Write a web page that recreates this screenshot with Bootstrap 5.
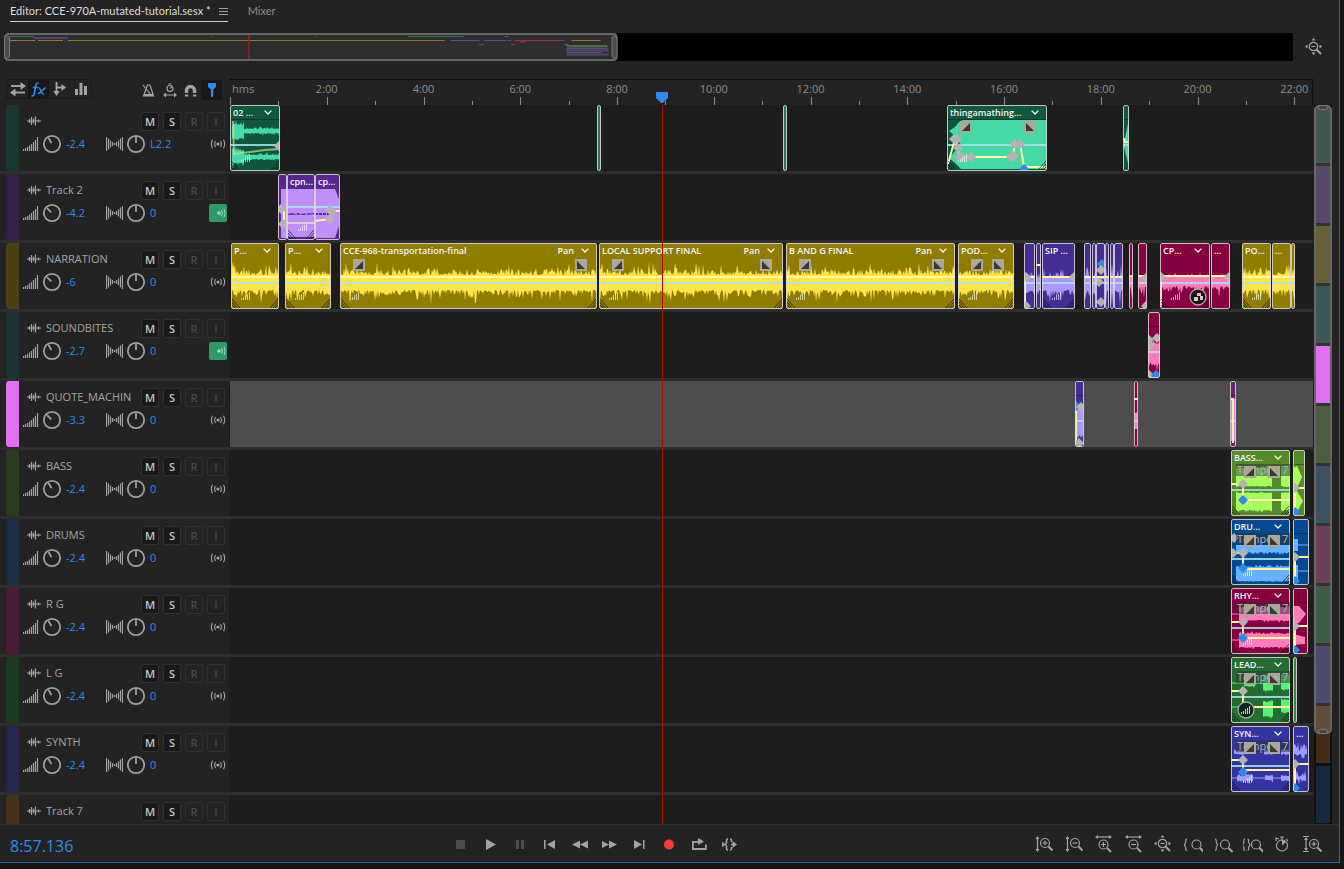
<!DOCTYPE html>
<html lang="en" data-bs-theme="dark">
<head>
<meta charset="utf-8">
<meta name="viewport" content="width=device-width, initial-scale=1">
<title>Multitrack editor</title>
<link href="https://cdn.jsdelivr.net/npm/bootstrap@5.3.0/dist/css/bootstrap.min.css" rel="stylesheet">
<style>
  body { background: #161616; color: #a3a3a3; font: 11px/16px "Open Sans", "Noto Sans", sans-serif; }
  svg { display: block; }
  button { background: none; border: 0; padding: 0; color: inherit; }
  .editor { height: calc(100vh - 6px); margin-right: 4px; background: #232323; border: solid #2463a5; border-width: 0 1px 1px 0; }
  .tabs { height: 33px; flex: none; padding-left: 10px; gap: 20px; font-family: Lato, "Open Sans", sans-serif; }
  .tabs a { color: #8c8c8c; text-decoration: none; height: 22px; padding-top: 3px; }
  .tabs a.current { color: #dedede; border-bottom: 1px solid #cfcfcf; gap: 8px; }
  .overview { height: 28px; flex: none; margin: 0 12px 17px 4px; gap: 12px; }
  .overview-track { background: #000; height: 28px; }
  .tools { height: 27px; }
  .left-col { width: 230px; }
  .tool-group { margin: 1px 0 0 6px; border: 1px solid #1a1a1a; border-radius: 2px; height: 20px; }
  .tool { width: 21px; height: 20px; display: flex; align-items: center; justify-content: center; }
  .tool.on { background: #181818; color: #2d8ceb; }
  .ruler { margin-top: 1px; border: solid #0c0c0c; border-width: 1px 1px 0 0; color: #8c8c8c; }
  .ruler span { position: absolute; top: 1px; transform: translateX(-50%); }
  .ruler span.unit { transform: none; left: 2px; }
  .ruler i { position: absolute; bottom: 0; width: 1px; height: 4px; background: #8c8c8c; }
  .ruler i.major { height: 8px; }
  .right-col { width: 26px; }
  .tracks { min-height: 0; flex: 1 1 0; border-bottom: 1px solid #303030; }
  .track-list { overflow: hidden; }
  .track { height: 69px; border-bottom: 3px solid #2e2e2e; padding-left: 6px; }
  .strip { width: 13px; border-radius: 3px 0 0 3px; }
  .head { width: 211px; padding: 7px 2px 0 4px; border-right: 1px solid #1c1c1c; }
  .lane { background: #1d1d1d; }
  .track.chosen .lane { background: #4d4d4d; }
  .name-line { height: 18px; padding-left: 4px; }
  .name-line .title { width: 100px; padding-left: 5px; white-space: nowrap; }
  .sq { width: 18px; height: 19px; margin-right: 4px; border: 1px solid #303030; border-radius: 2px; background: #191919; color: #c4c4c4; font: 600 11px/17px "Open Sans", sans-serif; }
  .sq.off { background: #232323; color: #484848; }
  .knob-line { height: 20px; margin-top: 4px; }
  .val { color: #2d8ceb; }
  .knob-box { width: 23px; padding-left: 3px; }
  .gain { width: 44px; padding-left: 4px; }
  .pan { width: 60px; padding-left: 4px; }
  .mono { width: 18px; height: 18px; border-radius: 2px; }
  .mono.on { background: #2f9a68; color: #a5d8bd; }
  .clip { position: absolute; top: 0; height: 66px; overflow: hidden; border-radius: 2px; background: var(--deep); }
  .clip::after { content: ""; position: absolute; inset: 0; border: 1px solid #ded8d8; border-radius: 2px; opacity: .85; }
  .clip > svg { position: absolute; inset: 0; width: 100%; height: 100%; }
  .clip-head { position: relative; z-index: 1; height: 15px; padding: 0 8px 0 3px; color: #f6f6f6; font-size: 9px; line-height: 15px; font-weight: 600; white-space: nowrap; }
  .clip-head svg { margin-left: 7px; }
  .tempo { position: absolute; z-index: 1; left: 5px; top: 14px; right: 0; height: 12px; background: #2a323880; color: #b4b7ba; font-size: 11px; line-height: 12px; padding-left: 1px; white-space: nowrap; }
  .playhead { position: absolute; top: 0; bottom: -3px; width: 1px; background: #b40808; z-index: 3; }
  .marker { position: absolute; bottom: 2px; z-index: 3; transform: translateX(-50%); color: #2d8ceb; }
  .vscroll { width: 18px; margin-left: 1px; background: #101010; }
  .vscroll .cells { height: 100%; gap: 3px; padding: 1px 2px; }
  .thumb { position: absolute; inset: 0 0 auto 0; height: 87.5%; border: 2px solid #666; border-radius: 5px; background: #ffffff26; }
  .grip { position: absolute; left: 2px; width: 10px; height: 5px; border: 1px solid #777; border-radius: 3px; background: #444; }
  .footer-bar { height: 37px; flex: none; }
  .clock { color: #2d8ceb; font-size: 16px; line-height: 24px; padding: 5px 0 0 10px; }
  .fb { width: 30px; height: 37px; display: flex; align-items: center; justify-content: center; }
  .fb.dim { color: #4c4c4c; }
  .zooms { margin-right: 11px; }
</style>
</head>
<body>
<svg width="0" height="0" class="position-absolute" aria-hidden="true">
  <symbol id="wave" viewBox="0 0 14 10"><path d="M0 5h14M2.500 3v4M4.500 1v8M6.500 2.500v5M8.500 .5v9M11.500 3.500v3" stroke="currentColor" stroke-width="1.200" fill="none"/></symbol>
  <symbol id="bars" viewBox="0 0 16 14"><path d="M.5 14v-2M2.500 14v-3M4.500 14v-4M6.500 14v-5.500M8.500 14V7M10.500 14V5M12.500 14V3M14.500 14V0" stroke="currentColor" stroke-width="1.200"/></symbol>
  <symbol id="panico" viewBox="0 0 17 14"><path d="M.5 0v14M2.500 1.500v11M4.500 3.500v7M6.500 5v4M10.500 5v4M12.500 3.500v7M14.500 1.500v11M16.500 0v14M8.500 6v2" stroke="currentColor" stroke-width="1.200"/></symbol>
  <symbol id="mono" viewBox="0 0 16 10"><circle cx="8" cy="5" r="1.600" fill="currentColor"/><path d="M5.500 2Q3.800 5 5.500 8M10.500 2q1.700 3 0 6M2.500 .8Q.2 5 2.500 9.200M13.500 .8q2.300 4.200 0 8.400" fill="none" stroke="currentColor" stroke-width="1.100"/></symbol>
  <symbol id="monoR" viewBox="0 0 16 10"><circle cx="9" cy="5" r="1.800" fill="currentColor"/><path d="M11.500 2q1.700 3 0 6M14 .8q2.300 4.200 0 8.400" fill="none" stroke="currentColor"/></symbol>
  <symbol id="chev" viewBox="0 0 8 5"><path d="M.6.6 4 4 7.400.6" fill="none" stroke="currentColor" stroke-width="1.300"/></symbol>
  <symbol id="fit" viewBox="0 0 18 18"><circle cx="8.500" cy="8.500" r="4.200" fill="none" stroke="currentColor" stroke-width="1.200"/><path d="M6.500 8.500h4" stroke="currentColor"/><path d="m11.500 11.500 4.500 4.500" stroke="currentColor" stroke-width="2"/><path d="M8.500 0l2 2.500h-4zM8.500 17l2-2.500h-4zM0 8.500l2.500-2v4zM17 8.500l-2.500-2v4z" fill="currentColor" stroke="none"/></symbol>
</svg>

<main class="editor d-flex flex-column">
  <nav class="tabs d-flex align-items-start" aria-label="Panels">
    <a href="#editor" class="current d-flex">Editor: CCE-970A-mutated-tutorial.sesx *
      <svg width="9" height="9" class="mt-1" stroke="#9c9c9c"><path d="M0 1.500h9M0 4.500h9M0 7.500h9"/></svg></a>
    <a href="#mixer">Mixer</a>
  </nav>

  <section class="overview d-flex align-items-center" aria-label="Overview">
    <svg class="overview-track flex-fill" viewBox="0 0 1290 28" preserveAspectRatio="none" id="mini"></svg>
    <button type="button" aria-label="Zoom out full" class="pe-1"><svg width="18" height="18"><use href="#fit"/></svg></button>
  </section>

  <div class="tools d-flex flex-shrink-0">
    <div class="left-col d-flex justify-content-between flex-shrink-0">
      <div class="tool-group d-flex align-items-center">
        <button type="button" class="tool" aria-label="Inputs and outputs"><svg width="16" height="14" fill="none" stroke="currentColor" stroke-width="1.800"><path d="M1 4h12M3 10.500h12"/><path d="M10.500 0 16 4l-5.500 4zM5.500 6.500 0 10.500l5.500 4z" fill="currentColor" stroke="none"/></svg></button>
        <button type="button" class="tool on" aria-label="Effects"><svg width="15" height="15" fill="none" stroke="currentColor" stroke-width="1.600"><path d="M7.500 1.500C5 .5 4.800 3 4.300 6L3.200 12c-.3 1.700-1.200 2.200-2.700 1.700M1.800 5.500h5M7.500 5.500c2 0 2.500 7 5.500 6.500M14.500 5.500 7 12"/></svg></button>
        <button type="button" class="tool" aria-label="Sends"><svg width="13" height="14" fill="none" stroke="currentColor" stroke-width="1.800"><path d="M3.500 0v10M3.500 5.500H9"/><path d="m8.500 2 4.500 3.500L8.500 9zM.3 9h6.400L3.500 14z" fill="currentColor" stroke="none"/></svg></button>
        <button type="button" class="tool" aria-label="EQ"><svg width="12" height="12" fill="currentColor"><path d="M0 6h3v6H0zM4.500 0h3v12h-3zM9 3h3v9H9z"/></svg></button>
      </div>
      <div class="d-flex" style="padding:2px 8px 0 0">
        <button type="button" class="tool" aria-label="Metronome"><svg width="13" height="13" fill="none" stroke="currentColor" stroke-width="1.200"><path d="M5.500 1h2.500l3.500 11h-10zM1 1l8 10"/><path d="M2 10h9v2H2z" fill="currentColor" stroke="none"/></svg></button>
        <button type="button" class="tool" aria-label="Time stretch"><svg width="14" height="15" fill="none" stroke="currentColor" stroke-width="1.100"><circle cx="7" cy="5.500" r="3"/><path d="M7 5.500 9 3.500M5.500 1h3M2 12h10"/><path d="M3 9.500 0 12l3 2.500zM11 9.500l3 2.500-3 2.500z" fill="currentColor" stroke="none"/></svg></button>
        <button type="button" class="tool" aria-label="Snapping"><svg width="13" height="13" fill="none" stroke="currentColor"><path d="M2.500 9V6.500a4 4 0 0 1 8 0V9" stroke-width="3.400"/><path d="M1 11.500h3.200M9 11.500h3.200" stroke-width="2"/></svg></button>
        <button type="button" class="tool on" aria-label="Pin playhead"><svg width="8" height="14" fill="currentColor"><path d="M0 0h8v4L5 6.500V14H3V6.500L0 4z"/></svg></button>
      </div>
    </div>
    <div class="ruler position-relative flex-fill" id="ruler"><span class="unit">hms</span></div>
    <div class="right-col"></div>
  </div>

  <div class="tracks d-flex">
    <div class="track-list position-relative flex-fill" id="tracks"></div>
    <div class="right-col flex-shrink-0">
      <div class="vscroll position-relative h-100">
        <div class="cells d-flex flex-column" id="cells"></div>
        <div class="thumb"><i class="grip" style="top:-2px"></i><i class="grip" style="bottom:-2px"></i></div>
      </div>
    </div>
  </div>

  <footer class="footer-bar d-flex align-items-center">
    <div class="col-4 clock">8:57.136</div>
    <div class="d-flex" id="transport"></div>
    <div class="d-flex ms-auto zooms" id="zooms"></div>
  </footer>
</main>

<script src="https://cdn.jsdelivr.net/npm/bootstrap@5.3.0/dist/js/bootstrap.bundle.min.js"></script>
<script>
// Visible range of the timeline, in timeline units; two minutes are 96.85 units.
const SPAN = 1083, TWO_MIN = 96.85, HEAD = 432;
const pct = u => (u / SPAN * 100).toFixed(3) + '%';
let seed = 7;
const rnd = () => (seed = (seed * 16807) % 2147483647) / 2147483647;

const tones = {
  green: ['#10573e', '#46d8a6'], purple: ['#57288c', '#bf8ff8'], gold: ['#907c00', '#ffe44a'],
  violet: ['#442e94', '#ab98ff'], rose: ['#870040', '#ff7cbb'], lime: ['#56892a', '#a6ff5c'],
  blue: ['#054a90', '#6ab2ff'], leaf: ['#236d33', '#5df077'], indigo: ['#3434a0', '#9d9cff'], pink: ['#6d1f76', '#e27af4'],
  sliver: ['#2a7a5c', '#2a7a5c'], leafSliver: ['#3c7f4a', '#3c7f4a']
};

// One block of waveform: x0, x1, top, bottom, spike height up, spike height down
function block([x0, x1, t, b, ju, jd]) {
  const up = [], dn = [], ph = rnd() * 6;
  const spike = () => rnd() < .06 ? .9 + rnd() * .4 : .75 * Math.pow(rnd(), 2);
  for (let x = x0; x <= x1; x++) {
    const swell = .75 + .25 * Math.sin(x / 5 + ph) * Math.sin(x / 17 + ph);
    up.push(x + ' ' + (t - ju * swell * spike()).toFixed(1));
    dn.unshift(x + ' ' + (b + jd * swell * spike()).toFixed(1));
  }
  return 'M' + up.join('L') + 'L' + dn.join('L') + 'Z';
}
const fadeIn = (x, y) => `<rect x="${x}" y="${y}" width="12" height="12" fill="#a9a89a"/><path d="M${x + 10} ${y + 2}v8h-8z" fill="#3b3a2c"/>`;
const fadeOut = (x, y) => `<rect x="${x}" y="${y}" width="12" height="12" fill="#a9a89a"/><path d="M${x + 2} ${y + 2}v8h8z" fill="#3b3a2c"/>`;
const sig = (x, y) => `<path d="M${x + .5} ${y}v-2M${x + 2.5} ${y}v-3M${x + 4.5} ${y}v-5M${x + 6.5} ${y}v-6M${x + 8.5} ${y}v-8" stroke="#fff" stroke-opacity=".6"/>`;
const dia = ([x, y, c]) => `<path d="M${x} ${y - 5}l5 5-5 5-5-5z" fill="${c ? '#2d8ceb' : '#b4b2b2'}"/>`;

function clip(c) {
  const [deep, hi] = tones[c.tone], w = c.len;
  let g = `<path d="${(c.wave || []).map(block).join('') + (c.shape || '')}" fill="${hi}"/>`;
  if (c.raw) g += c.raw;
  if (c.line) g += `<path d="M0 ${c.line}h${w}" stroke="#a9e4ec" stroke-opacity=".85" stroke-width="2"/>`;
  if (c.soft) g += `<path d="M0 ${c.soft}h${w}" stroke="#fff79e" stroke-width="2"/>`;
  if (c.auto) g += `<path d="M${c.auto.map(p => p.join(' ')).join('L')}" fill="none" stroke="#fbf5a8" stroke-width="2"/>`;
  if (c.pts) g += c.pts.map(dia).join('');
  if (w > 26) g += `<path d="M1 56l8 9M1 59l5 6M1 62l3 3M${w - 1} 56l-8 9M${w - 1} 59l-5 6M${w - 1} 62l-3 3" stroke="#000" stroke-opacity=".6"/>`;
  if (c.divide) g += `<path d="M0 14.500h${w}" stroke="#000" stroke-opacity=".35"/>`;
  if (c.tin != null) c.icons = (c.icons || '') + fadeIn(c.tin, 16);
  if (c.tout != null) c.icons = (c.icons || '') + fadeOut(c.tout, 16);
  if (c.sig != null) g += sig(c.sig, 57);
  const svg = (k, z) => `<svg viewBox="0 0 ${w} 66" preserveAspectRatio="none" ${z ? 'class="z-1"' : ''}>${k}</svg>`;
  const head = c.label ? `<div class="clip-head d-flex align-items-center"><span class="flex-fill">${c.label}</span>${c.pan ? '<span>Pan</span>' : ''}${c.menu ? '<svg width="8" height="5"><use href="#chev"/></svg>' : ''}</div>` : '';
  return `<div class="clip" style="left:${pct(c.at)};width:${pct(w)};--deep:${deep}">${svg(g)}${head}${c.tempo ? '<div class="tempo">Tempo 17</div>' : ''}${c.icons ? svg(c.icons, 1) : ''}</div>`;
}

const gold = (at, len, label, o = {}) => ({ at, len, tone: 'gold', label, wave: [[0, len, 32, 47, 12, 12]], soft: 34, line: 40, sig: len > 25 ? 10 : null, ...o });
const vio = (at, len, o = {}) => ({ at, len, tone: 'violet', wave: [[0, len, 35, 47, 12, 14]], soft: 34, line: 40, ...o });
const ros = (at, len, o = {}) => ({ at, len, tone: 'rose', wave: [[0, len, 34, 43, 5, 14]], soft: 33, line: 40, ...o });
const stem = (tone, label, o) => ({ at: 1001, len: 59, tone, label, menu: 1, tempo: 1, tin: 13, tout: 37, line: 40, auto: [[0, 34], [12, 34], [12, 50], [59, 50]], pts: [[12, 34], [12, 50, 1]], sig: 12, ...o });
const tail = (tone, len, o) => ({ at: 1063, len, tone, divide: 1, auto: [[2, 64], [2, 38], [len, 38]], pts: [[2, 38], [2, 62, 1]], ...o });

const tracks = [
  { name: '', color: '#1b3530', vol: '-2.4', pan: 'L2.2', clips: [
    { at: 0, len: 50, tone: 'green', label: '02 …', menu: 1, divide: 1, wave: [[2, 14, 20, 32, 5, 5], [14, 49, 24, 28, 3, 3], [2, 14, 46, 58, 5, 5], [14, 49, 50, 54, 3, 3]], line: 40, sig: 11, raw: '<path d="M3 16L4 49L35 45L50 44" fill="none" stroke="#c5dc8f" stroke-width="2" opacity=".7"/>', pts: [[49, 41]] },
    { at: 367, len: 4, tone: 'sliver' }, { at: 553, len: 4, tone: 'sliver' },
    { at: 717, len: 100, tone: 'green', label: 'thingamathing…', menu: 1, divide: 1, line: 40, sig: 11, shape: 'M2 26L8 22 12 17 16 15H100V40H14L8 31zM2 53L8 46 14 40H100V64H14L8 58z', auto: [[1, 59], [8, 34], [11, 43], [12, 52], [66, 52], [68, 38], [73, 38], [77, 62], [98, 62]], pts: [[7, 34], [10, 34], [11, 43], [12, 52], [15, 52], [24, 52], [64, 52], [67, 51], [68, 39], [73, 39], [77, 64, 1]], tin: 13, tout: 77 },
    { at: 893, len: 6, tone: 'green', divide: 1, line: 40, shape: 'M6 14V62L1 42V38z', auto: [[1, 33], [2, 37], [6, 37]] }] },
  { name: 'Track 2', color: '#33214a', vol: '-4.2', pan: '0', on: 1, clips: [
    { at: 48, len: 9, tone: 'purple', shape: 'M3 15H9V64H3z', pts: [[3, 35], [5, 50]], auto: [[6, 37], [6, 46]] },
    { at: 57, len: 28, tone: 'purple', label: 'cpn…', wave: [[0, 28, 15, 39, 0, 2], [0, 28, 41, 63, 2, 0]], line: 33, raw: '<path d="M0 49h28" stroke="#ddcbd8" stroke-width="2"/>', sig: 11 },
    { at: 85, len: 25, tone: 'purple', label: 'cp…', shape: 'M0 15H20L24 25V52L20 64H0z', line: 33, raw: '<path d="M0 40h15" stroke="#57288c" stroke-width="2" stroke-dasharray="3 1"/>', auto: [[0, 47], [15, 45], [17, 37], [25, 37]], pts: [[15, 45], [17, 38], [15, 36]] }] },
  { name: 'NARRATION', color: '#4a4014', vol: '-6', pan: '0', clips: [
    gold(1, 48, 'P…', { menu: 1 }), gold(55, 46, 'P…', { menu: 1 }),
    gold(110, 257, 'CCE-968-transportation-final', { menu: 1, pan: 1, tin: 13, tout: 235 }),
    gold(369, 184, 'LOCAL SUPPORT FINAL', { menu: 1, pan: 1, tin: 13, tout: 161 }),
    gold(556, 169, 'B AND G FINAL', { menu: 1, pan: 1, tin: 13, tout: 146 }),
    gold(728, 56, 'POD…', { menu: 1, tin: 13, tout: 34 }),
    vio(794, 11, { pts: [[2, 34], [2, 63]], auto: [[1, 34], [1, 63]] }), vio(806, 5, { soft: 22 }), vio(812, 33, { label: 'SIP …', sig: 10, pts: [[32, 34]] }),
    vio(854, 7), vio(862, 4), vio(866, 9, { wave: [[0, 9, 34, 36, 1, 1]], pts: [[6, 21, 1], [5, 27], [3, 39], [5, 59]] }), vio(875, 4), vio(880, 4), vio(884, 9),
    ros(899, 4), ros(908, 9, { pts: [[8, 35], [8, 63]] }),
    ros(930, 50, { label: 'CP…', menu: 1, sig: 11, auto: [[1, 64], [1, 34]], pts: [[1, 34]], icons: '<circle cx="38" cy="54" r="8" fill="#25101a" stroke="#aaa" stroke-width="1.300"/><path d="M34 54h4v4h-4zM40 53h3v4h-3zM37 50h4v3h-4z" fill="#ccc"/>' }),
    ros(981, 19, { label: '…', pts: [[18, 34]] }),
    gold(1012, 29, 'PO…'), gold(1042, 19, '…'), gold(1061, 4)] },
  { name: 'SOUNDBITES', color: '#1b3333', vol: '-2.7', pan: '0', on: 1, clips: [
    ros(918, 12, { divide: 1, soft: 0, wave: [[0, 12, 32, 51, 5, 12]], pts: [[1, 28], [9, 26], [2, 33], [1, 63], [8, 63, 1]] })] },
  { name: 'QUOTE_MACHIN', color: '#e070f0', vol: '-3.3', pan: '0', chosen: 1, clips: [
    vio(845, 9, { divide: 1, soft: 0, wave: [[0, 9, 29, 54, 3, 8]], auto: [[1, 30], [1, 62]], pts: [[1, 25, 1], [6, 26], [4, 62]] }),
    ros(904, 4, { soft: 18, wave: [[0, 4, 32, 48, 2, 2]] }),
    { at: 1000, len: 6, tone: 'pink', shape: 'M1 18H6V60H1z', line: 40, auto: [[1, 18], [3, 18], [3, 62]], divide: 1 }] },
  { name: 'BASS', color: '#2c3b20', vol: '-2.4', pan: '0', clips: [
    stem('lime', 'BASS…', { wave: [[5, 41, 18, 36, 5, 2], [50, 59, 18, 36, 5, 2], [5, 41, 43, 60, 2, 3], [50, 59, 43, 60, 2, 3]] }),
    tail('lime', 12, { shape: 'M0 18L4 16 9 27 4 38H0zM0 42L4 41 10 51 4 62H0z' })] },
  { name: 'DRUMS', color: '#1c2f42', vol: '-2.4', pan: '0', clips: [
    stem('blue', 'DRU…', { wave: [[5, 59, 26, 33, 0, 5], [5, 59, 48, 62, 3, 1]], pts: [[3, 19], [2, 34], [12, 34], [12, 49, 1]] }),
    tail('blue', 16, { shape: 'M0 20H5V32H0zM0 46H5V60H0z', raw: '<path d="M0 26h16M0 52h16" stroke="#6ab2ff"/>' })] },
  { name: 'R G', color: '#4a1a36', vol: '-2.4', pan: '0', clips: [
    stem('rose', 'RHY…', { wave: [[8, 59, 20, 32, 6, 3], [8, 59, 46, 59, 4, 3]], raw: '<path d="M0 26h9M0 52h9" stroke="#ff7cbb"/>' }),
    tail('rose', 15, { shape: 'M0 18H6L13 26 6 35H0zM0 46L12 49V56L0 57z' })] },
  { name: 'L G', color: '#1c3a22', vol: '-2.4', pan: '0', clips: [
    stem('leaf', 'LEAD…', { sig: null, wave: [[13, 24, 20, 29, 4, 3], [32, 42, 18, 33, 3, 3], [50, 59, 18, 32, 3, 3], [32, 42, 45, 59, 3, 3], [50, 59, 43, 55, 3, 3]], pts: [[12, 34]], raw: '<path d="M0 26h59M0 50h59" stroke="#5df077"/>', icons: '<circle cx="15" cy="53" r="8" fill="#11281b" stroke="#aaa" stroke-width="1.300"/><path d="M10.500 57v-2M12.500 57v-3M14.500 57v-5M16.500 57v-6M18.500 57v-8" stroke="#c8d0cc"/>' }),
    { at: 1063, len: 4, tone: 'leafSliver' }] },
  { name: 'SYNTH', color: '#27264c', vol: '-2.4', pan: '0', clips: [
    stem('indigo', 'SYN…', { pts: [[12, 34], [12, 46, 1]], auto: [[0, 34], [12, 34], [12, 44], [59, 44]], wave: [[3, 20, 25, 28, 3, 1], [33, 42, 24, 28, 2, 2], [50, 58, 24, 28, 2, 2], [6, 22, 50, 54, 5, 5], [34, 42, 50, 54, 3, 3], [50, 58, 50, 54, 3, 3]], raw: '<path d="M0 52h59" stroke="#9d9cff"/>' }),
    tail('indigo', 16, { label: '…', divide: 0, wave: [[1, 14, 25, 28, 14, 5], [1, 13, 51, 53, 9, 9]] })] },
  { name: 'Track 7', color: '#44301b', clips: [], folded: 1 }
];

const knob = (label, ang) => `<button type="button" class="knob-box" aria-label="${label}"><svg width="20" height="20" viewBox="0 0 20 20" fill="none" stroke="#a0a0a0" stroke-width="1.800"><circle cx="10" cy="10" r="8.200"/><path d="M10 9V3" transform="rotate(${ang} 10 10)"/></svg></button>`;
const icon = (id, w, h) => `<svg width="${w}" height="${h}"><use href="#${id}"/></svg>`;

document.getElementById('tracks').innerHTML = tracks.map(t => `
  <section class="track d-flex${t.chosen ? ' chosen' : ''}" aria-label="${t.name || 'Track 1'}">
    <div class="strip flex-shrink-0" style="background:${t.color}"></div>
    <div class="head flex-shrink-0">
      <div class="name-line d-flex align-items-center">${icon('wave', 14, 10)}<span class="title">${t.name}</span>
        <button type="button" class="sq">M</button><button type="button" class="sq">S</button><button type="button" class="sq off">R</button><button type="button" class="sq off me-0">I</button></div>
      ${t.folded ? '' : `<div class="knob-line d-flex align-items-center">${icon('bars', 16, 14)}${knob('Volume', parseFloat(t.vol) < -3 ? -45 : -30)}<span class="val gain">${t.vol}</span>
        ${icon('panico', 17, 14)}${knob('Pan', 0)}<span class="val pan">${t.pan}</span>
        <button type="button" class="mono d-flex align-items-center justify-content-center ms-auto${t.on ? ' on' : ''}" aria-label="Mono">${icon(t.on ? 'monoR' : 'mono', 16, 10)}</button></div>`}
    </div>
    <div class="lane position-relative flex-fill">${t.clips.map(clip).join('')}<i class="playhead" style="left:${pct(HEAD)}"></i></div>
  </section>`).join('');

let r = '';
for (let i = 0; i <= 22; i++) {
  r += `<i class="${i % 2 ? '' : 'major'}" style="left:${pct(i * TWO_MIN / 2)}"></i>`;
  if (i && i % 2 === 0) r += `<span style="left:${pct(i * TWO_MIN / 2)}">${i}:00</span>`;
}
r += `<svg class="marker" style="left:${pct(HEAD)}" width="12" height="11"><path d="M0 1q0-1 1-1h10q1 0 1 1v5L6.800 11H5.200L0 6z" fill="currentColor"/></svg>`;
document.getElementById('ruler').insertAdjacentHTML('beforeend', r);

document.getElementById('cells').innerHTML = ['#1f3a34', '#3c2a50', '#4f4518', '#1f3a3a', '#e070f0', '#2f4020', '#1e3246', '#50203c', '#1f4028', '#2e2d58', '#452e18', '#16293f']
  .map((c, i) => `<i class="flex-fill position-relative${i === 4 ? ' z-1' : ''}" style="background:${c}"></i>`).join('');

// Overview lines: x0, x1, y, colour, thickness
const mini = [[6, 30, 3.5, '#2f7059'], [208, 209, 3.5, '#2f7059'], [312, 313, 3.5, '#2f7059'], [404, 460, 3.5, '#2f7059'], [501, 505, 3.5, '#2f7059'], [29, 64, 5, '#54406e', 2],
  [6, 31, 7.5, '#8d7d22'], [34, 59, 7.5, '#8d7d22'], [64, 441, 7.5, '#8d7d22'], [447, 476, 7.5, '#5a4c9c'], [480, 503, 7.5, '#5a4c9c'], [504, 508, 7.5, '#963058'], [511, 561, 7.5, '#963058'], [568, 597, 7.5, '#8d7d22'],
  [475, 480, 11.500, '#5a4c9c'], [508, 511, 11.500, '#963058'], [561, 565, 11.500, '#85408a'], [516, 523, 9, '#6c3048', 2], [563, 604, 13, '#56673e', 2], [563, 605, 15.500, '#2f5d8d', 2], [563, 605, 17.500, '#7c3458', 2], [563, 598, 19.500, '#3a704a', 1], [563, 605, 21.500, '#464682', 2]];
document.getElementById('mini').innerHTML = '<rect x="1" y="1" width="612" height="26" rx="3" fill="#2e2e2e" stroke="#666" stroke-width="2"/>'
  + mini.map(([a, b, y, c, h = 1]) => `<path d="M${a} ${y}H${b}" stroke="${c}" stroke-width="${h}"/>`).join('')
  + '<path d="M245 2v24" stroke="#8c2727" stroke-width="1.500"/>'
  + '<rect x="0.500" y="3" width="5" height="22" rx="2" fill="#4c4c4c" stroke="#777"/><rect x="608.500" y="3" width="5" height="22" rx="2" fill="#4c4c4c" stroke="#777"/>';

const fb = (list, w) => list.map(([label, art, cls = '']) => `<button type="button" class="fb ${cls}" aria-label="${label}"><svg width="${w}" height="18" viewBox="0 0 ${w} 18" fill="none" stroke="currentColor" stroke-width="1.200">${art}</svg></button>`).join('');
const S = 'fill="currentColor" stroke="none"';
document.getElementById('transport').innerHTML = fb([
  ['Stop', `<path d="M4 5h9v9H4z" ${S}/>`, 'dim'], ['Play', `<path d="M4 4l10 5.500L4 15z" ${S}/>`],
  ['Pause', `<path d="M4 5h3v9H4zM9 5h3v9H9z" ${S}/>`, 'dim'], ['Previous', `<path d="M2 5h1.500v9H2zM13 5v9L5 9.500z" ${S}/>`],
  ['Rewind', `<path d="M8 5.500v8L0 9.500zM16 5.500v8l-8-4z" ${S}/>`], ['Fast forward', `<path d="M-1 5.500v8l8-4zM7 5.500v8l8-4z" ${S}/>`],
  ['Next', `<path d="M2 5v9l8-4.500zM11 5h1.500v9H11z" ${S}/>`], ['Record', '<circle cx="7" cy="9.500" r="5" fill="#f53b3b" stroke="none"/>'],
  ['Loop', `<path d="M2 7H.9v7h13V9.500" stroke-width="1.800"/><path d="M2 7h5" stroke-width="1.800"/><path d="M6 3l6 3.500L6 10z" ${S}/>`],
  ['Skip selection', `<path d="M0 9.500h3M9 9.500h4M6 4Q4.500 4 4.500 6v2L3 9.500 4.500 11v2q0 2 1.500 2M8 4q1.500 0 1.500 2v1M9.500 12v1q0 2-1.500 2" stroke-width="1.600"/><path d="M1.500 6.500v6L-2 9.500zM10.500 6l4.500 3.500-4.500 3.500z" ${S}/>`]], 18);
const lens = (x, y, mark = '') => `<circle cx="${x}" cy="${y}" r="4.500"/><path d="m${x + 3.500} ${y + 3.500} 4 4" stroke-width="2"/>${mark ? `<path d="M${x - 2.500} ${y}h5${mark === '+' ? `M${x} ${y - 2.500}v5` : ''}"/>` : ''}`;
const vert = `<path d="M4.500 3v12"/><path d="M4.500 1l2 3h-4zM4.500 17l2-3h-4z" ${S}/>`;
const horz = `<path d="M4 2h13"/><path d="M2 2l3-2v4zM19 2l-3-2v4z" ${S}/>`;
const stopwatch = '<circle cx="9" cy="10.500" r="5.500"/><path d="M9 2v4M7 2h4M13 4l2 2M3 6V3l3 1"/><path d="M9 10.500V5a5.500 5.500 0 0 1 4 2z" fill="currentColor" stroke="none"/>';
document.getElementById('zooms').innerHTML = fb([
  ['Zoom in vertically', vert + lens(12, 8, '+')], ['Zoom out vertically', vert + lens(12, 8, '-')],
  ['Zoom in', horz + lens(10.500, 9.500, '+')], ['Zoom out', horz + lens(10.500, 9.500, '-')],
  ['Zoom out full', '<svg x="1" width="18" height="18" stroke="none"><use href="#fit"/></svg>'],
  ['Zoom to in point', '<path d="M4 4Q2.500 4 2.800 7L1.500 10 2.800 12.500Q2.500 15.500 4 15.500"/>' + lens(13.500, 9.500)],
  ['Zoom to out point', '<path d="M2 4q1.500 0 1.200 3L4.500 10 3.200 12.500q.3 3-1.200 3"/>' + lens(12, 9.500)],
  ['Zoom to selection', '<path d="M2 4Q.5 4 1 7l-1.500 3L1 12.500Q.5 15.500 2 15.500M4.500 4Q6 4 5.500 7L7 10l-1.500 2.500q.5 3-1 3"/>' + lens(13, 9.500)],
  ['Zoom to time', stopwatch], ['Zoom selected track', '<path d="M3 3v12M0 1.500h6M0 16.500h6"/>' + `<path d="M3 2l2 3H1zM3 16l2-3H1z" ${S}/>` + lens(11, 9, '+')]], 20);
</script>
</body>
</html>
